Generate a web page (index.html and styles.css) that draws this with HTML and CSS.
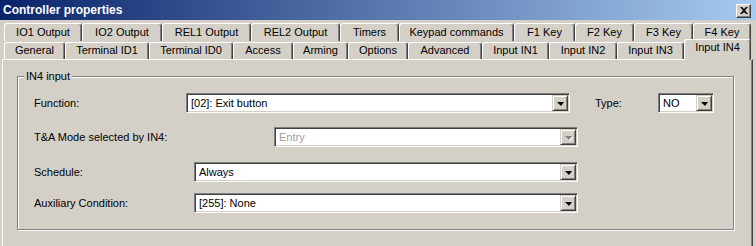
FILE: index.html
```html
<!DOCTYPE html>
<html lang="en">
<head>
    <meta charset="UTF-8">
    <title>Controller properties</title>
    <link rel="stylesheet" href="styles.css">
</head>
<body>

    <div class="window">
        <div class="titlebar">
            <span class="title">Controller properties</span>
            <button class="close" title="Close">
                <svg width="8" height="7" viewBox="0 0 8 7">
                    <path d="M0 0h2l2 2 2-2h2L5 3.5 8 7H6L4 5 2 7H0l3-3.5z" fill="#000"/>
                </svg>
            </button>
        </div>

        <div class="tabs">
            <div class="tab-row back">
                <div class="tab" style="width:78px">IO1 Output</div>
                <div class="tab" style="width:80px">IO2 Output</div>
                <div class="tab" style="width:89px">REL1 Output</div>
                <div class="tab" style="width:89px">REL2 Output</div>
                <div class="tab" style="width:59px">Timers</div>
                <div class="tab" style="width:115px">Keypad commands</div>
                <div class="tab" style="width:61px">F1 Key</div>
                <div class="tab" style="width:59px">F2 Key</div>
                <div class="tab" style="width:59px">F3 Key</div>
                <div class="tab" style="width:58px">F4 Key</div>
            </div>
            <div class="tab-row front">
                <div class="tab" style="width:61px">General</div>
                <div class="tab" style="width:84px">Terminal ID1</div>
                <div class="tab" style="width:84px">Terminal ID0</div>
                <div class="tab" style="width:60px">Access</div>
                <div class="tab" style="width:55px">Arming</div>
                <div class="tab" style="width:60px">Options</div>
                <div class="tab" style="width:74px">Advanced</div>
                <div class="tab" style="width:67px">Input IN1</div>
                <div class="tab" style="width:68px">Input IN2</div>
                <div class="tab" style="width:67px">Input IN3</div>
                <div class="tab active" style="width:67px">Input IN4</div>
            </div>
        </div>

        <div class="panel">
            <div class="group">
                <span class="legend">IN4 input</span>

                <div class="row">
                    <span class="label" style="width:152px">Function:</span>
                    <div class="combo" style="width:384px">
                        <span class="value">[02]: Exit button</span>
                        <span class="drop"><i class="arrow"></i></span>
                    </div>
                    <span class="label type-label">Type:</span>
                    <div class="combo" style="width:56px">
                        <span class="value">NO</span>
                        <span class="drop"><i class="arrow"></i></span>
                    </div>
                </div>

                <div class="row ta">
                    <span class="label" style="width:240px">T&amp;A Mode selected by IN4:</span>
                    <div class="combo disabled" style="width:304px">
                        <span class="value">Entry</span>
                        <span class="drop"><i class="arrow"></i></span>
                    </div>
                </div>

                <div class="row sched">
                    <span class="label" style="width:160px">Schedule:</span>
                    <div class="combo" style="width:384px">
                        <span class="value">Always</span>
                        <span class="drop"><i class="arrow"></i></span>
                    </div>
                </div>

                <div class="row aux">
                    <span class="label" style="width:160px">Auxiliary Condition:</span>
                    <div class="combo" style="width:384px">
                        <span class="value">[255]: None</span>
                        <span class="drop"><i class="arrow"></i></span>
                    </div>
                </div>
            </div>
        </div>
    </div>

</body>
</html>
```

FILE: styles.css
```css
* { box-sizing: border-box; }

body {
    margin: 0;
    font-family: "Liberation Sans", Arial, sans-serif;
    font-size: 11px;
    color: #000;
    background-color: #d4d0c8;
}
.window {
    width: 756px;
    height: 246px;
    overflow: hidden;
    background: #d4d0c8;
}

/* title bar */
.titlebar {
    height: 20px;
    display: flex;
    align-items: center;
    justify-content: space-between;
    padding: 0 5px 0 3px;
    background: linear-gradient(to right, #0a246a, #a6caf0);
}
.title {
    color: white;
    font-weight: bold;
    font-size: 12px;
}
.close {
    width: 15px;
    height: 14px;
    margin-top: 1px;
    padding: 0;
    display: flex;
    align-items: center;
    justify-content: center;
    background: #d4d0c8;
    border: 1px solid;
    border-color: #fff #404040 #404040 #fff;
    box-shadow: inset -1px -1px #808080;
}

/* tabs */
.tabs {
    padding-top: 3px;
}
.tab-row {
    display: flex;
    height: 18px;
    padding-left: 4px;
}
.tab {
    height: 18px;
    line-height: 16px;
    text-align: center;
    white-space: nowrap;
    background: #d4d0c8;
    border: 1px solid;
    border-color: #fff #404040 transparent #fff;
    border-bottom: none;
    border-radius: 3px 3px 0 0;
    box-shadow: inset -1px 0 #808080;
}
.tab-row.front .tab {
    margin-top: 1px;
    height: 17px;
    line-height: 15px;
}
.tab-row.front .tab.active {
    position: relative;
    z-index: 1;
    margin-top: -2px;
    height: 21px;
    line-height: 15px;
}

/* page */
.panel {
    margin-left: 2px;
    width: 751px;
    height: 200px;
    padding-top: 16px;
    padding-left: 14px;
    border: 1px solid;
    border-color: #fff #404040 #404040 #fff;
    box-shadow: inset -1px 0 #808080;
}
.group {
    position: relative;
    width: 717px;
    height: 154px;
    padding: 16px 0 0 16px;
    border: 1px solid #808080;
    box-shadow: inset 1px 1px #fff, 1px 1px #fff;
}
.legend {
    position: absolute;
    left: 6px;
    top: -8px;
    padding: 0 2px;
    line-height: 14px;
    background: #d4d0c8;
}

.row {
    display: flex;
    align-items: center;
    height: 20px;
}
.row.ta { margin-top: 14px; }
.row.sched { margin-top: 15px; }
.row.aux { margin-top: 11px; }

.label {
    flex: none;
}
.type-label {
    margin-left: 25px;
    width: 63px;
}

/* combo boxes */
.combo {
    flex: none;
    height: 20px;
    display: flex;
    align-items: center;
    justify-content: space-between;
    background: white;
    border: 1px solid;
    border-color: #808080 #fff #fff #808080;
    box-shadow: inset 1px 1px #404040, inset -1px -1px #d4d0c8;
    padding: 1px;
}
.value {
    padding-left: 3px;
    white-space: nowrap;
}
.drop {
    width: 16px;
    height: 16px;
    display: flex;
    align-items: center;
    justify-content: center;
    background: #d4d0c8;
    border: 1px solid;
    border-color: #d4d0c8 #404040 #404040 #d4d0c8;
    box-shadow: inset 1px 1px #fff, inset -1px -1px #808080;
}
.arrow {
    width: 0;
    height: 0;
    margin-top: 1px;
    border-left: 4px solid transparent;
    border-right: 3px solid transparent;
    border-top: 4px solid #000;
}
.combo.disabled .value {
    color: #a0a0a0;
}
.combo.disabled .arrow {
    border-top-color: #808080;
    filter: drop-shadow(1px 1px 0 #fff);
}
```
